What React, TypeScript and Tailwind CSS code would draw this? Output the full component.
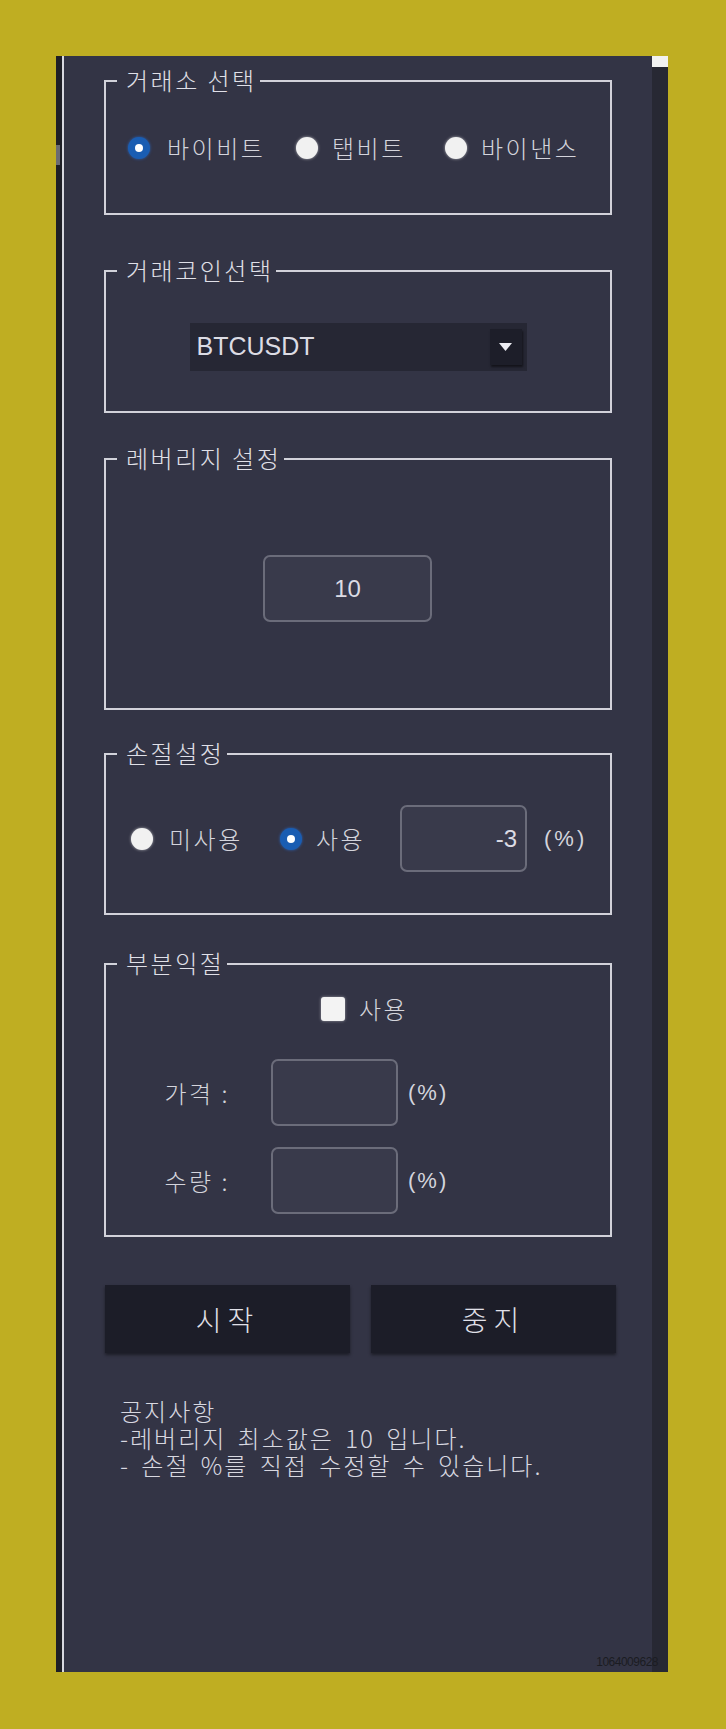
import type { ReactNode } from "react"

function GroupBox({ title, className, children }: { title: string; className: string; children?: ReactNode }) {
  return (
    <div className={`relative w-[508px] border-2 border-[#d2d2da] ${className}`}>
      <span className="absolute -top-[16px] left-[11px] bg-[#333445] pl-[9px] pr-[3px] text-[24px] leading-[28px] text-[#e0e0e8]">
        {title}
      </span>
      {children}
    </div>
  )
}

function Radio({ checked }: { checked?: boolean }) {
  if (checked) {
    return (
      <span className="flex h-[22px] w-[22px] shrink-0 items-center justify-center rounded-full bg-[#1a5db2] shadow-[0_0_3px_rgba(40,110,210,0.8)]">
        <span className="h-[8px] w-[8px] rounded-full bg-white" />
      </span>
    )
  }
  return <span className="h-[22px] w-[22px] shrink-0 rounded-full bg-[#f1f1f1] shadow-[0_0_3px_rgba(255,255,255,0.6)]" />
}

function Field({ value, className }: { value?: string; className: string }) {
  return (
    <div
      className={`flex h-[67px] items-center rounded-[7px] border-2 border-[#6b6c7a] bg-[#393a4b] font-['Liberation_Sans',sans-serif] text-[24px] tracking-normal text-[#dcdce4] ${className}`}
    >
      {value}
    </div>
  )
}

export default function App() {
  return (
    <div className="h-[1729px] w-[726px] bg-[#bfae22] pl-[56px] pt-[56px] font-['Noto_Sans_CJK_KR',sans-serif] font-light tracking-[2.5px] text-[#d4d4dc]">
      <div className="relative flex h-[1616px] w-[612px] bg-[#333445]">
        {/* left edge */}
        <div className="w-[6px] bg-[#1e1f26] pt-[89px]">
          <div className="h-[20px] w-[4px] bg-[#6a6b72]" />
        </div>
        <div className="w-[2px] bg-[#d8d8e0]" />

        {/* main */}
        <div className="flex-1 pl-[40px] pt-[24px]">
          <GroupBox title="거래소 선택" className="flex h-[135px] items-center pl-[22px]">
            <div className="flex w-[168px] items-center gap-[17px] text-[24px]">
              <Radio checked />
              <span>바이비트</span>
            </div>
            <div className="flex w-[149px] items-center gap-[14px] text-[24px]">
              <Radio />
              <span>탭비트</span>
            </div>
            <div className="flex items-center gap-[14px] text-[24px]">
              <Radio />
              <span>바이낸스</span>
            </div>
          </GroupBox>

          <GroupBox title="거래코인선택" className="mt-[55px] flex h-[143px] justify-center pt-[51px]">
            <div className="flex h-[48px] w-[337px] items-center justify-between bg-[#262734] pl-[7px] pr-[5px]">
              <span className="font-['Liberation_Sans',sans-serif] text-[25px] font-normal tracking-normal text-[#dcdce4]">BTCUSDT</span>
              <div className="flex h-[36px] w-[32px] items-center justify-center bg-[#1d1e29] shadow-[1px_2px_2px_rgba(0,0,0,0.5)]">
                <svg width="13" height="8" viewBox="0 0 13 8">
                  <path d="M0 0 H13 L6.5 8 Z" fill="#ececf2" />
                </svg>
              </div>
            </div>
          </GroupBox>

          <GroupBox title="레버리지 설정" className="mt-[45px] h-[252px] pl-[157px] pt-[95px]">
            <Field value="10" className="w-[169px] justify-center" />
          </GroupBox>

          <GroupBox title="손절설정" className="mt-[43px] h-[162px] pt-[50px]">
            <div className="flex h-[67px] items-center pl-[25px] text-[24px]">
              <div className="flex w-[149px] items-center gap-[16px]">
                <Radio />
                <span>미사용</span>
              </div>
              <div className="flex w-[120px] items-center gap-[14px]">
                <Radio checked />
                <span>사용</span>
              </div>
              <Field value="-3" className="w-[127px] justify-end pr-[8px]" />
              <span className="ml-[17px] font-['Liberation_Sans',sans-serif] text-[22px] tracking-[3px]">(%)</span>
            </div>
          </GroupBox>

          <GroupBox title="부분익절" className="mt-[48px] h-[274px] pt-[32px] text-[24px]">
            <div className="flex h-[24px] items-center gap-[14px] pl-[215px]">
              <span className="h-[24px] w-[24px] rounded-[3px] bg-[#f3f3f3] shadow-[0_0_3px_rgba(255,255,255,0.5)]" />
              <span>사용</span>
            </div>
            <div className="mt-[38px] flex items-center">
              <span className="w-[124px] text-right">가격 :</span>
              <Field className="ml-[41px] w-[127px]" />
              <span className="ml-[10px] font-['Liberation_Sans',sans-serif] text-[22px] tracking-[2px]">(%)</span>
            </div>
            <div className="mt-[21px] flex items-center">
              <span className="w-[124px] text-right">수량 :</span>
              <Field className="ml-[41px] w-[127px]" />
              <span className="ml-[10px] font-['Liberation_Sans',sans-serif] text-[22px] tracking-[2px]">(%)</span>
            </div>
          </GroupBox>

          <div className="mt-[48px] flex gap-[21px] pl-[1px]">
            <button className="h-[68px] w-[245px] bg-[#1c1d28] text-[28px] tracking-[6px] text-[#e0e0e8] shadow-[0_2px_3px_rgba(0,0,0,0.45)]">
              시작
            </button>
            <button className="h-[68px] w-[245px] bg-[#1c1d28] text-[28px] tracking-[6px] text-[#e0e0e8] shadow-[0_2px_3px_rgba(0,0,0,0.45)]">
              중지
            </button>
          </div>

          <div className="mt-[44px] pl-[16px] text-[24px] leading-[27px] tracking-[2px] [word-spacing:4px] text-[#d8d8e0]">
            <p>공지사항</p>
            <p>-레버리지 최소값은 10 입니다.</p>
            <p>- 손절 %를 직접 수정할 수 있습니다.</p>
          </div>
        </div>

        {/* right strip */}
        <div className="w-[16px] bg-[#272833]">
          <div className="h-[11px] bg-[#f2f2f2]" />
        </div>

        <span className="absolute bottom-[1px] right-[10px] font-['Liberation_Sans',sans-serif] text-[12px] font-normal tracking-[-0.5px] text-[#1b1c22]">
          1064009628
        </span>
      </div>
    </div>
  )
}
